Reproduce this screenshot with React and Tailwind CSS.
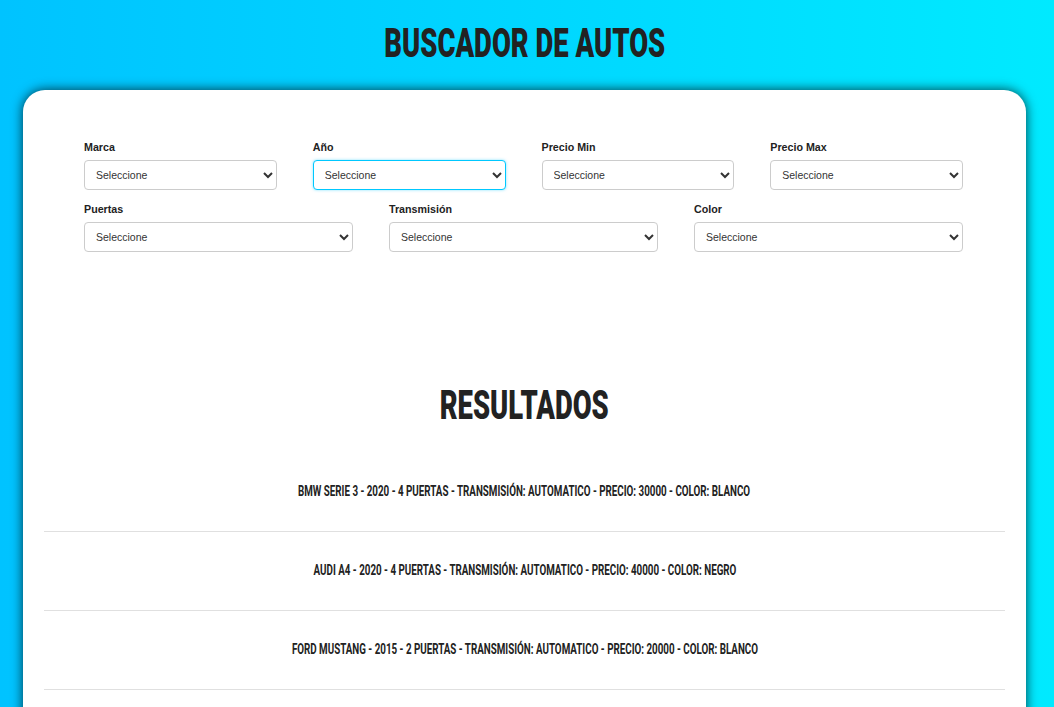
import React from "react";

const disp = { fontFamily: "Roboto, 'DejaVu Sans', sans-serif" };

function Field({ label, focused }) {
  return (
    <div className="flex flex-col">
      <label className="text-[10.7px] font-bold leading-[13px] text-[#222]" style={{ fontFamily: "'Liberation Sans', Arial, sans-serif" }}>{label}</label>
      <select
        defaultValue=""
        className={
          "mt-[6px] h-[30px] w-full rounded-[4px] border bg-white pl-[7px] pr-[8px] text-[10.5px] text-[#333] outline-none " +
          (focused ? "border-[#00c8ff] shadow-[0_0_3px_rgba(0,200,255,0.5)]" : "border-[#cccccc]")
        }
        style={{ fontFamily: "'Liberation Sans', Arial, sans-serif" }}
      >
        <option value="">Seleccione</option>
      </select>
    </div>
  );
}

const rows = [
  "BMW SERIE 3 - 2020 - 4 PUERTAS - TRANSMISIÓN: AUTOMATICO - PRECIO: 30000 - COLOR: BLANCO",
  "AUDI A4 - 2020 - 4 PUERTAS - TRANSMISIÓN: AUTOMATICO - PRECIO: 40000 - COLOR: NEGRO",
  "FORD MUSTANG - 2015 - 2 PUERTAS - TRANSMISIÓN: AUTOMATICO - PRECIO: 20000 - COLOR: BLANCO",
];

export default function App() {
  return (
    <div className="min-h-screen overflow-hidden bg-gradient-to-r from-[#00c3ff] to-[#00eaff] pt-[24px]">
      <h1 className="ml-[23px] flex h-[40px] w-[1003px] justify-center text-[40px] font-black leading-[40px] text-[#222]" style={disp}>
        <span className="inline-block scale-x-[0.686]">BUSCADOR DE AUTOS</span>
      </h1>
      <div className="ml-[23px] mt-[26px] w-[1003px] rounded-t-[22px] bg-white px-[21px] pb-[40px] pt-[51px] shadow-[0_0_12px_rgba(0,0,0,0.75)]">
        <div className="ml-[40px] w-[879px]">
          <div className="grid grid-cols-4 gap-x-[36px]">
            <Field label="Marca" />
            <Field label="Año" focused />
            <Field label="Precio Min" />
            <Field label="Precio Max" />
          </div>
          <div className="mt-[13px] grid grid-cols-3 gap-x-[36px]">
            <Field label="Puertas" />
            <Field label="Transmisión" />
            <Field label="Color" />
          </div>
        </div>
        <h2 className="mt-[134px] flex h-[40px] justify-center text-[40px] font-black leading-[40px] text-[#222]" style={disp}>
          <span className="inline-block scale-x-[0.686]">RESULTADOS</span>
        </h2>
        <div className="mt-[27px]">
          {rows.map((r) => (
            <div key={r} className="flex justify-center border-b border-[#e0e0e0] pb-[33px] pt-[31px]">
              <p className="inline-block scale-x-[0.70] whitespace-nowrap text-[14px] font-bold leading-[14px] text-[#222]" style={disp}>{r}</p>
            </div>
          ))}
        </div>
      </div>
    </div>
  );
}
